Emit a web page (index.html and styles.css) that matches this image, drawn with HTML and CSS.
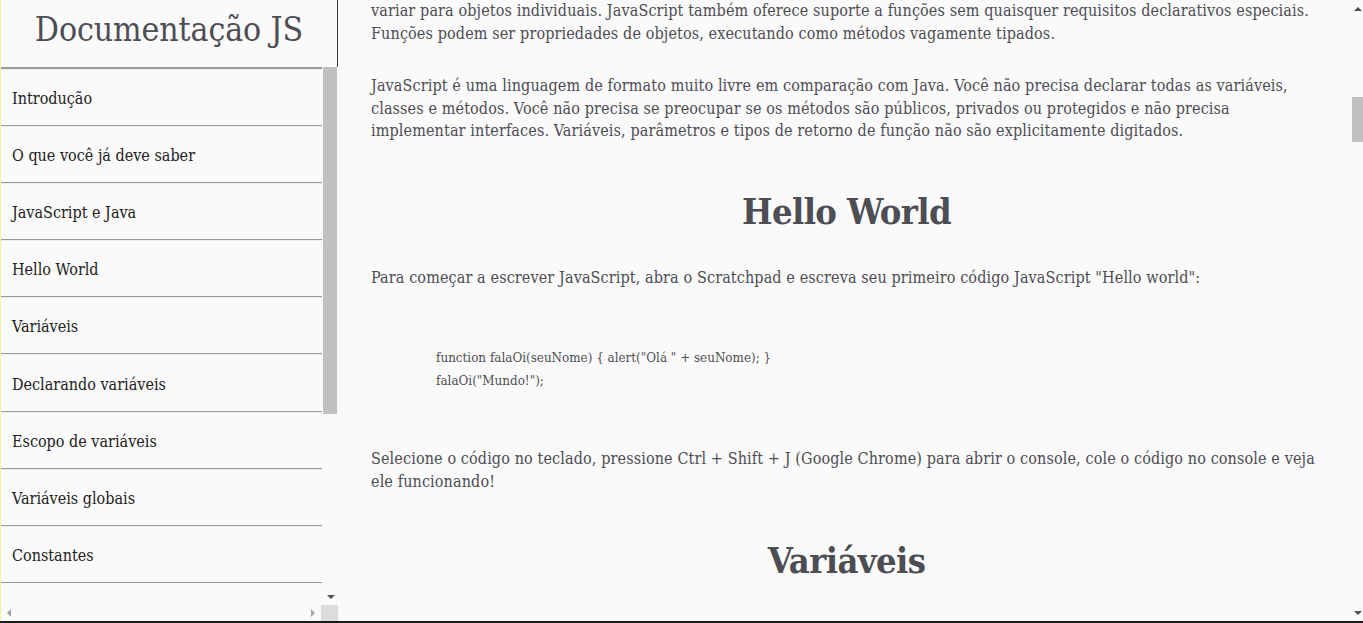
FILE: index.html
```html
<!DOCTYPE html>
<html lang="pt-BR">
<head>
<meta charset="utf-8">
<title>Documentação JS</title>
<link rel="stylesheet" href="styles.css">
</head>
<body>
<nav class="sidebar">
  <header class="sidebar-header"><h1 class="sidebar-title">Documentação JS</h1></header>
  <div class="sidebar-body">
    <ul class="nav-list">
      <li class="nav-item"><a class="nav-link" href="#introducao">Introdução</a></li>
      <li class="nav-item"><a class="nav-link" href="#saber">O que você já deve saber</a></li>
      <li class="nav-item"><a class="nav-link" href="#java">JavaScript e Java</a></li>
      <li class="nav-item"><a class="nav-link" href="#hello">Hello World</a></li>
      <li class="nav-item"><a class="nav-link" href="#variaveis">Variáveis</a></li>
      <li class="nav-item"><a class="nav-link" href="#declarando">Declarando variáveis</a></li>
      <li class="nav-item"><a class="nav-link" href="#escopo">Escopo de variáveis</a></li>
      <li class="nav-item"><a class="nav-link" href="#globais">Variáveis globais</a></li>
      <li class="nav-item"><a class="nav-link" href="#constantes">Constantes</a></li>
    </ul>
    <div class="vbar">
      <div class="vbar-thumb"></div>
      <div class="bar-fill"></div>
      <div class="bar-btn"><span class="arrow arrow-down"></span></div>
    </div>
  </div>
  <div class="hbar">
    <div class="hbar-track">
      <span class="arrow arrow-left"></span>
      <span class="arrow arrow-right"></span>
    </div>
    <div class="hbar-corner"></div>
  </div>
</nav>
<main class="main">
  <div class="content">
    <p class="text p-first">variar para objetos individuais. JavaScript também oferece suporte a funções sem quaisquer requisitos declarativos especiais. Funções podem ser propriedades de objetos, executando como métodos vagamente tipados.</p>
    <p class="text p-second">JavaScript é uma linguagem de formato muito livre em comparação com Java. Você não precisa declarar todas as variáveis, classes e métodos. Você não precisa se preocupar se os métodos são públicos, privados ou protegidos e não precisa implementar interfaces. Variáveis, parâmetros e tipos de retorno de função não são explicitamente digitados.</p>
    <h2 class="section-title t-hello">Hello World</h2>
    <p class="text p-intro">Para começar a escrever JavaScript, abra o Scratchpad e escreva seu primeiro código JavaScript "Hello world":</p>
    <pre class="code"><code>function falaOi(seuNome) { alert("Olá " + seuNome); }
falaOi("Mundo!");</code></pre>
    <p class="text p-after">Selecione o código no teclado, pressione Ctrl + Shift + J (Google Chrome) para abrir o console, cole o código no console e veja ele funcionando!</p>
    <h2 class="section-title t-var">Variáveis</h2>
  </div>
  <div class="page-bar">
    <div class="bar-btn page-btn"><span class="arrow arrow-up"></span></div>
    <div class="page-gap"></div>
    <div class="page-thumb"></div>
    <div class="bar-fill"></div>
    <div class="bar-btn page-btn"><span class="arrow arrow-down"></span></div>
  </div>
</main>
</body>
</html>
```
FILE: styles.css
```css
* { box-sizing: border-box; }

html, body { height: 100%; }

body {
  margin: 0;
  height: 100vh;
  display: flex;
  background: #fafafa;
  border-bottom: 2px solid #1c1c1c;
  font-family: "DejaVu Serif Condensed", "DejaVu Serif", serif;
  color: #4d4d54;
  overflow: hidden;
}

/* ---------- sidebar ---------- */
.sidebar {
  width: 338px;
  flex: none;
  display: flex;
  flex-direction: column;
  border-left: 1px solid #f6f0a8;
  background: #fafafa;
}

.sidebar-header {
  height: 67px;
  flex: none;
  border-right: 1px solid #3a3a3a;
  display: flex;
  align-items: center;
  justify-content: center;
}

.sidebar-title {
  margin: 0 0 8px 0;
  font-weight: normal;
  font-size: 33.5px;
  color: #4d4d54;
  letter-spacing: -0.1px;
}

.sidebar-body {
  flex: 1;
  min-height: 0;
  display: flex;
}

.nav-list {
  list-style: none;
  margin: 0;
  padding: 0;
  width: 321px;
  flex: none;
  overflow: hidden;
  border-top: 2px solid #9a9a9a;
}

.nav-item {
  height: 57.1px;
  border-bottom: 1px solid #9a9a9a;
  border-top: 1px solid #ececec;
  display: flex;
  align-items: center;
  padding-left: 11px;
  padding-top: 2px;
}

.nav-link {
  color: #222;
  text-decoration: none;
  font-size: 16px;
}

.vbar {
  width: 15px;
  flex: none;
  margin-left: 1px;
  display: flex;
  flex-direction: column;
}

.vbar-thumb {
  height: 347px;
  margin: 0 1px 0 0;
  background: #c1c1c1;
  flex: none;
}

.bar-fill { flex: 1; }

.bar-btn {
  height: 17px;
  flex: none;
  display: flex;
  align-items: center;
  justify-content: center;
}

.arrow {
  width: 0;
  height: 0;
  display: block;
}

.arrow-down {
  border-left: 4px solid transparent;
  border-right: 4px solid transparent;
  border-top: 4px solid #505050;
}

.arrow-up {
  border-left: 4px solid transparent;
  border-right: 4px solid transparent;
  border-bottom: 4px solid #505050;
}

.arrow-left {
  border-top: 4px solid transparent;
  border-bottom: 4px solid transparent;
  border-right: 4px solid #a3a3a3;
}

.arrow-right {
  border-top: 4px solid transparent;
  border-bottom: 4px solid transparent;
  border-left: 4px solid #a3a3a3;
}

.hbar {
  height: 16px;
  flex: none;
  display: flex;
}

.hbar-track {
  flex: 1;
  display: flex;
  align-items: center;
  justify-content: space-between;
  padding: 0 6px 0 6px;
}

.hbar-corner {
  width: 17px;
  background: #dcdcdc;
}

/* ---------- main ---------- */
.main {
  flex: 1;
  min-width: 0;
  display: flex;
}

.content {
  flex: 1;
  min-width: 0;
  overflow: hidden;
  padding: 0 30px 0 33px;
}

.text {
  margin: 0;
  font-size: 16px;
  line-height: 22.5px;
  letter-spacing: 0.12px;
}

.p-second { margin-top: 30px; }
.p-intro { margin-top: 32px; }
.p-after { margin-top: 56px; }

.section-title {
  margin: 0;
  text-align: center;
  font-size: 36px;
  line-height: 48px;
  font-weight: bold;
  color: #4d4d54;
  letter-spacing: -0.6px;
}

.t-hello { margin-top: 44px; }
.t-var { margin-top: 43px; }

.code {
  margin: 57px 0 0 0;
  padding-left: 65px;
  font-family: "DejaVu Serif Condensed", "DejaVu Serif", serif;
  font-size: 13.3px;
  line-height: 23px;
  color: #4d4d54;
  white-space: pre;
}

.code code { font-family: inherit; }

.page-bar {
  width: 11px;
  flex: none;
  display: flex;
  flex-direction: column;
}

.page-btn {
  justify-content: flex-start;
  padding-left: 2px;
}

.page-gap { height: 80px; flex: none; }

.page-thumb {
  height: 45px;
  flex: none;
  background: #c1c1c1;
}
```
